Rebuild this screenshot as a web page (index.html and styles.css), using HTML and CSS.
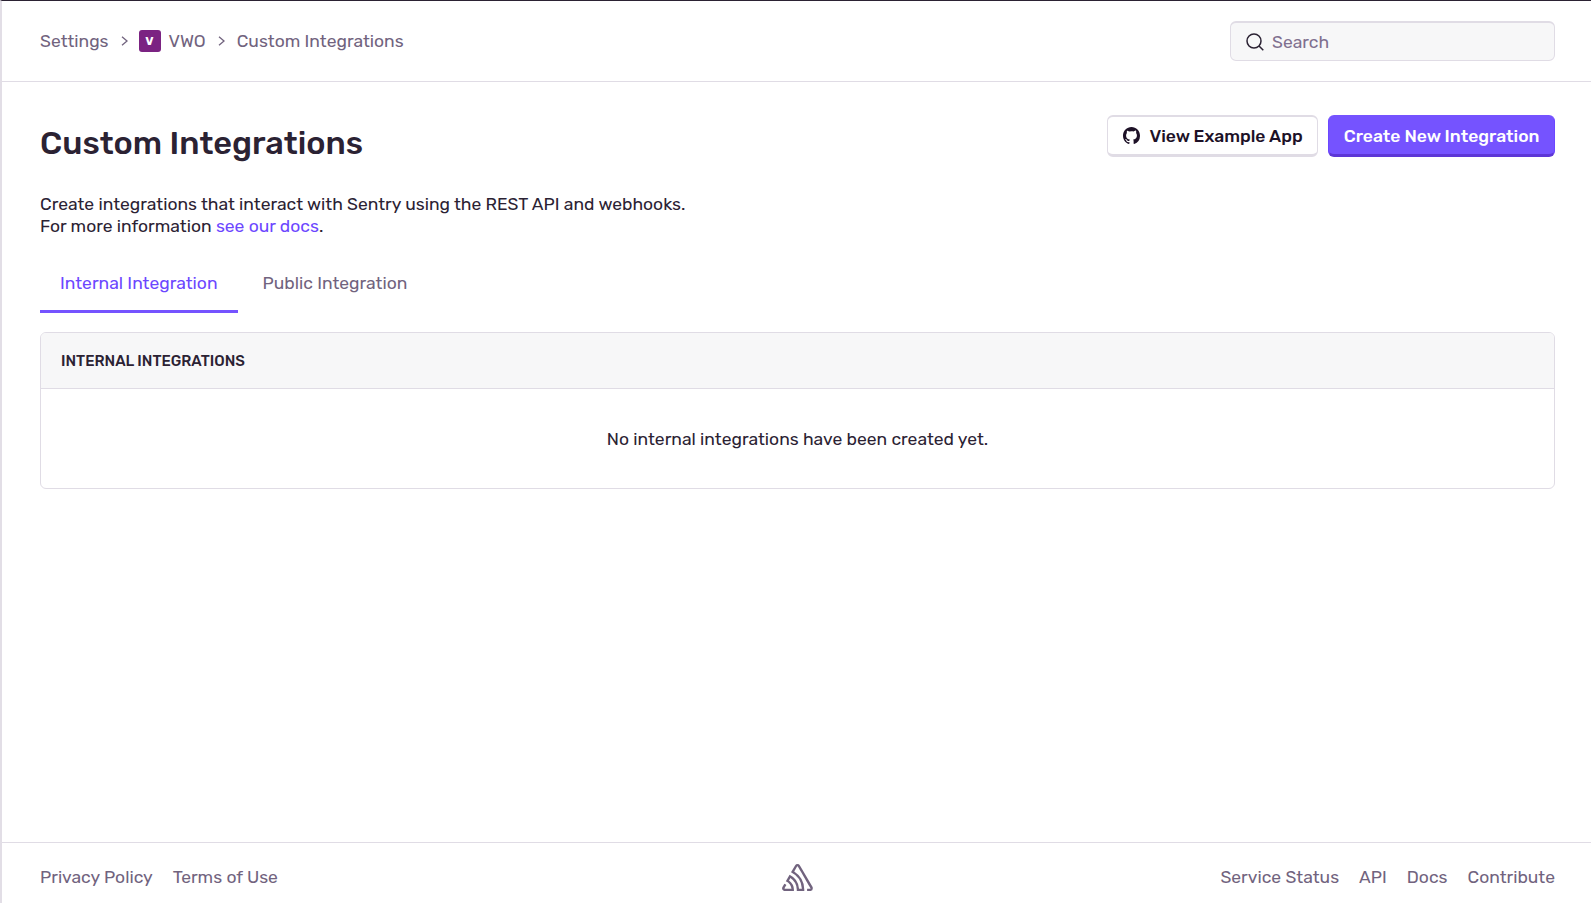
FILE: index.html
```html
<!DOCTYPE html>
<html lang="en">
<head>
<meta charset="utf-8">
<title>Custom Integrations</title>
<link rel="stylesheet" href="styles.css">
</head>
<body>
<div class="app">
  <header class="topbar">
    <nav class="crumbs">
      <span>Settings</span>
      <svg class="chev" viewBox="0 0 7 10"><path d="M1 .8 6 5 1 9.200"/></svg>
      <span class="avatar">V</span>
      <span>VWO</span>
      <svg class="chev" viewBox="0 0 7 10"><path d="M1 .8 6 5 1 9.200"/></svg>
      <span>Custom Integrations</span>
    </nav>
    <div class="search">
      <svg class="search-icon" viewBox="0 0 18 18"><circle cx="8" cy="8" r="7"/><path d="M13 13l4.300 4.300"/></svg>
      <span>Search</span>
    </div>
  </header>
  <main class="content">
    <div class="title-row">
      <h1>Custom Integrations</h1>
      <div class="actions">
        <a class="btn">
          <svg class="gh" viewBox="0 0 16 16"><path d="M8 0C3.580 0 0 3.670 0 8.200c0 3.620 2.290 6.690 5.470 7.780.4.070.55-.18.550-.39v-1.400c-2.230.5-2.700-1.100-2.700-1.100-.36-.95-.89-1.200-.89-1.200-.73-.51.05-.5.050-.5.810.06 1.230.85 1.230.85.720 1.260 1.870.9 2.330.69.070-.530.280-.9.510-1.100-1.780-.21-3.640-.91-3.640-4.040 0-.89.310-1.620.82-2.190-.08-.21-.36-1.040.08-2.160 0 0 .670-.22 2.200.84A7.400 7.400 0 0 1 8 3.970c.68 0 1.360.09 2 .27 1.530-1.060 2.200-.84 2.200-.84.440 1.120.16 1.950.08 2.160.51.570.82 1.300.82 2.190 0 3.140-1.870 3.830-3.650 4.030.290.260.540.750.540 1.520v2.290c0 .22.150.47.550.39A8.130 8.130 0 0 0 16 8.200C16 3.670 12.420 0 8 0Z"/></svg>
          <span>View Example App</span>
        </a>
        <a class="btn primary">Create New Integration</a>
      </div>
    </div>
    <p class="desc">Create integrations that interact with Sentry using the REST API and webhooks.<br>For more information <a class="link">see our docs</a>.</p>
    <div class="tabs">
      <div class="tab active">Internal Integration</div>
      <div class="tab">Public Integration</div>
    </div>
    <section class="panel">
      <div class="panel-head">Internal Integrations</div>
      <div class="panel-body">No internal integrations have been created yet.</div>
    </section>
  </main>
  <footer class="footer">
    <div class="foot-links"><span>Privacy Policy</span><span>Terms of Use</span></div>
    <svg class="logo" viewBox="0 0 50 44"><path d="M29 2.260a4.670 4.670 0 0 0-8 0L14.420 13.530A32.210 32.210 0 0 1 32.170 40.190H27.550A27.680 27.680 0 0 0 12.090 17.470L6 28a15.920 15.920 0 0 1 9.230 12.170H4.620A.76.76 0 0 1 4 39.060l2.940-5a10.740 10.740 0 0 0-3.360-1.900l-2.910 5a4.540 4.540 0 0 0 1.690 6.240A4.660 4.660 0 0 0 4.620 44H19.150a19.400 19.400 0 0 0-8-17.310l2.310-4A23.870 23.870 0 0 1 23.760 44H36.070a35.880 35.880 0 0 0-16.410-31.800l4.670-8a.77.77 0 0 1 1.050-.27c.53.29 20.290 34.770 20.660 35.170a.76.76 0 0 1-.68 1.130H40.600q.09 1.910 0 3.810h4.780A4.590 4.590 0 0 0 50 39.430a4.490 4.490 0 0 0-.62-2.280Z"/></svg>
    <div class="foot-links end"><span>Service Status</span><span>API</span><span>Docs</span><span>Contribute</span></div>
  </footer>
</div>
</body>
</html>
```
FILE: styles.css
```css
* { box-sizing: border-box; }
html, body { margin: 0; height: 100%; }
body { font-family: Rubik, Inter, "Open Sans", "Liberation Sans", sans-serif; color: #2b2233; background: #fff; }
.app { height: 903px; display: flex; flex-direction: column; border-top: 1px solid #2b2233; border-left: 2px solid #e2dee6; }
.topbar { height: 81px; flex: none; display: flex; justify-content: space-between; align-items: center; padding: 0 36px 0 38px; border-bottom: 1px solid #e0dce5; }
.crumbs { display: flex; align-items: center; font-size: 17.500px; color: #71637e; }
.chev { width: 7px; height: 10px; margin: 0 12px; fill: none; stroke: #71637e; stroke-width: 1.300; }
.chev + .avatar { margin-left: -1px; }
.avatar { width: 22px; height: 22px; margin-right: 8px; border-radius: 3px; background: #7b2382; color: #fff; font-size: 12px; font-weight: 700; display: flex; align-items: center; justify-content: center; }
.search { width: 325px; height: 40px; display: flex; align-items: center; gap: 8px; padding: 0 14px 0 15px; background: #f7f7f8; border: 1px solid #e0dce5; border-top-width: 2px; border-radius: 6px; font-size: 17.500px; color: #80708f; }
.search-icon { width: 18px; height: 18px; fill: none; stroke: #2b2233; stroke-width: 1.500; }
.content { flex: 1; padding: 33px 36px 0 38px; }
.title-row { display: flex; justify-content: space-between; align-items: flex-start; }
h1 { margin: 8px 0 0; font-size: 32.500px; line-height: 40px; font-weight: 500; }
.actions { display: flex; gap: 10px; }
.btn { height: 42px; display: flex; align-items: center; gap: 10px; padding: 0 14.500px; border: 1px solid #e0dce5; border-top-width: 2px; border-bottom-width: 3px; border-radius: 6px; font-size: 17.500px; font-weight: 500; color: #1d1127; }
.btn.primary { background: #7553ff; color: #fff; border-color: #7553ff #6c47ff #5d36d6; }
.gh { width: 17px; height: 17px; fill: #1d1127; }
.desc { margin: 31px 0 0; font-size: 17.500px; line-height: 21.500px; }
.link { color: #6c47ff; }
.tabs { display: flex; gap: 5px; margin-top: 24px; height: 52px; }
.tab { padding: 12px 20px 0; font-size: 17.500px; color: #71637e; border-bottom: 3px solid transparent; }
.tab.active { color: #6c47ff; border-bottom-color: #7553ff; }
.panel { margin-top: 19px; border: 1px solid #e0dce5; border-radius: 6px; overflow: hidden; }
.panel-head { height: 56px; display: flex; align-items: center; padding: 0 20px; background: #f7f7f8; border-bottom: 1px solid #e0dce5; font-size: 15px; font-weight: 500; text-transform: uppercase; }
.panel-body { height: 99px; display: flex; align-items: center; justify-content: center; font-size: 17.500px; }
.footer { height: 61px; flex: none; display: flex; align-items: center; justify-content: space-between; padding: 8px 36px 0 38px; border-top: 1px solid #e0dce5; }
.foot-links { display: flex; gap: 20px; font-size: 17.500px; color: #71637e; width: 340px; white-space: nowrap; }
.foot-links.end { justify-content: flex-end; }
.logo { width: 31px; height: 27px; fill: #71637e; }
```
